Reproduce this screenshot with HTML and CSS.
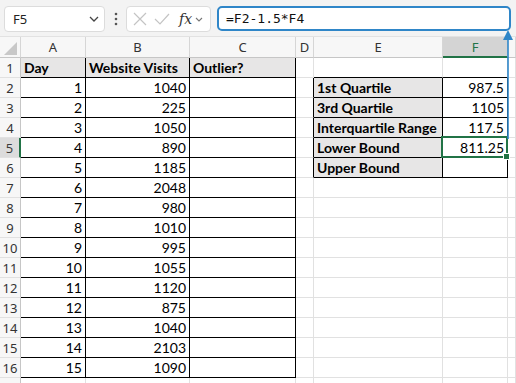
FILE: index.html
```html
<!DOCTYPE html>
<html lang="en">
<head>
    <meta charset="UTF-8">
    <meta name="viewport" content="width=device-width, initial-scale=1.0">
    <title>Outlier Bounds</title>
    <link rel="stylesheet" href="styles.css">
</head>
<body>

    <div class="toolbar">
        <div class="name-box">
            <span>F5</span>
            <svg class="chev" width="10" height="6" viewBox="0 0 10 6"><path d="M1 1l4 4 4-4" fill="none" stroke="#444" stroke-width="1.3"/></svg>
        </div>
        <svg class="dots" width="4" height="14" viewBox="0 0 4 14"><circle cx="2" cy="2" r="1.3" fill="#555"/><circle cx="2" cy="7" r="1.3" fill="#555"/><circle cx="2" cy="12" r="1.3" fill="#555"/></svg>
        <div class="fx-box">
            <svg width="14" height="14" viewBox="0 0 14 14"><path d="M1 1l12 12M13 1L1 13" stroke="#c4c4c4" stroke-width="1.2"/></svg>
            <svg width="16" height="12" viewBox="0 0 16 12"><path d="M1 6l5 5L15 1" fill="none" stroke="#c4c4c4" stroke-width="1.2"/></svg>
            <span class="fx">fx</span>
            <svg width="8" height="5" viewBox="0 0 8 5"><path d="M1 1l3 3 3-3" fill="none" stroke="#777" stroke-width="1.1"/></svg>
        </div>
        <div class="formula">=F2-1.5*F4</div>
    </div>

    <div class="sheet" id="sheet">
        <!-- cells are built by the script below -->
    </div>

    <svg class="trace" width="12" height="112" viewBox="0 0 12 112">
        <path d="M6 4V110" stroke="#2f86c8" stroke-width="1.6"/>
        <path d="M1 11L6 1l5 10z" fill="#2f86c8"/>
    </svg>

    <script>
        const visits = [1040, 225, 1050, 890, 1185, 2048, 980, 1010, 995, 1055, 1120, 875, 1040, 2103, 1090];
        const stats = [
            ['1st Quartile', '987.5'],
            ['3rd Quartile', '1105'],
            ['Interquartile Range', '117.5'],
            ['Lower Bound', '811.25'],
            ['Upper Bound', '']
        ];
        const sheet = document.getElementById('sheet');

        function addCell(text, cls) {
            const cell = document.createElement('div');
            cell.className = 'cell ' + (cls || '');
            cell.textContent = text;
            sheet.appendChild(cell);
        }

        // column headers
        addCell('', 'hd corner');
        ['A', 'B', 'C', 'D', 'E'].forEach(l => addCell(l, 'hd'));
        addCell('F', 'hd active-col');
        addCell('', 'hd');

        for (let r = 1; r <= 17; r++) {
            // row 17 is only a sliver at the bottom edge, so no number
            addCell(r < 17 ? String(r) : '', r === 5 ? 'rh active-row' : 'rh');

            if (r === 1) {
                addCell('Day', 'box fill bold');
                addCell('Website Visits', 'box fill bold');
                addCell('Outlier?', 'box fill bold');
                addCell('', '');
                addCell('', 'edge-b');
                addCell('', 'edge-b');
            } else if (r <= 16) {
                addCell(String(r - 1), 'box num');
                addCell(String(visits[r - 2]), 'box num');
                addCell('', 'box');
                const s = stats[r - 2];
                if (s) {
                    addCell('', 'edge-r');
                    addCell(s[0], 'box fill bold');
                    addCell(s[1], r === 5 ? 'box num selected' : 'box num');
                } else {
                    addCell('', '');
                    addCell('', '');
                    addCell('', '');
                }
            } else {
                addCell('', ''); addCell('', ''); addCell('', '');
                addCell('', ''); addCell('', ''); addCell('', '');
            }
            addCell('', '');
        }
    </script>

</body>
</html>
```

FILE: styles.css
```css
html, body {
    margin: 0;
    height: 100%;
    overflow: hidden;
    background: #fff;
}
body {
    position: relative;
    font-family: "Noto Sans", sans-serif;
}
.toolbar {
    height: 37px;
    box-sizing: border-box;
    background: #f3f3f3;
    border-bottom: 1px solid #e2e2e2;
    display: flex;
    align-items: flex-start;
    padding: 6px 4px 0 4px;
}
.name-box {
    width: 101px;
    height: 26px;
    box-sizing: border-box;
    background: #fff;
    border: 1px solid #dcdcdc;
    border-radius: 4px;
    display: flex;
    align-items: center;
    justify-content: space-between;
    padding: 0 5px 0 8px;
    font-size: 13px;
    color: #222;
}
.dots {
    margin: 6px 8px 0 9px;
}
.fx-box {
    width: 85px;
    height: 26px;
    box-sizing: border-box;
    background: #fff;
    border: 1px solid #dcdcdc;
    border-radius: 4px;
    display: flex;
    align-items: center;
    gap: 7px;
    padding: 0 4px 0 6px;
}
.fx {
    font-family: "DejaVu Serif", serif;
    font-style: italic;
    font-size: 14px;
    color: #333;
    margin-left: 2px;
    margin-right: -4px;
}
.formula {
    margin-left: 6px;
    width: 294px;
    height: 25px;
    box-sizing: border-box;
    border: 2px solid #2f86c8;
    border-radius: 5px;
    background: #fff;
    font-family: "DejaVu Sans Mono", monospace;
    font-size: 13px;
    line-height: 21px;
    padding-left: 7px;
    color: #111;
}
.sheet {
    display: grid;
    grid-template-columns: 21px 65px 104px 106px 18px 129px 65px 8px;
    grid-template-rows: 21px;
    grid-auto-rows: 20px;
}
.cell {
    box-sizing: border-box;
    border-right: 1px solid #e1e1e1;
    border-bottom: 1px solid #e1e1e1;
    padding: 0 3px;
    font-family: Lato, sans-serif;
    font-size: 14px;
    line-height: 20px;
    color: #000;
    white-space: nowrap;
    overflow: visible;
}
.hd, .rh {
    background: #f7f7f7;
    border-right: 1px solid #d6d6d6;
    border-bottom: 1px solid #c6c6c6;
    font-family: "Noto Sans", sans-serif;
    font-size: 13px;
    color: #333;
    text-align: center;
    padding: 0;
}
.hd {
    line-height: 20px;
}
.rh {
    border-bottom-color: #e1e1e1;
    border-right-color: #c6c6c6;
}
.corner {
    position: relative;
}
.corner::after {
    content: "";
    position: absolute;
    right: 3px;
    bottom: 2px;
    width: 13px;
    height: 13px;
    background: #c8c8c8;
    clip-path: polygon(100% 0, 100% 100%, 0 100%);
}
.active-col {
    background: #d4d4d4;
    border-bottom: 2px solid #217346;
    color: #217346;
}
.active-row {
    background: #dcdcdc;
    border-right: 2px solid #217346;
    color: #3c3c3c;
}
.box {
    border-right-color: #000;
    border-bottom-color: #000;
}
.edge-r {
    border-right-color: #000;
}
.edge-b {
    border-bottom-color: #000;
}
.fill {
    background: #e7e6e6;
}
.bold {
    font-weight: bold;
}
.num {
    text-align: right;
}
.selected {
    position: relative;
}
.selected::before {
    content: "";
    position: absolute;
    left: -2px;
    top: -2px;
    right: -1px;
    bottom: -1px;
    border: 2px solid #217346;
}
.selected::after {
    content: "";
    position: absolute;
    right: -3px;
    bottom: -3px;
    width: 5px;
    height: 5px;
    background: #217346;
    border: 1px solid #fff;
}
.trace {
    position: absolute;
    left: 502px;
    top: 29px;
}
```
